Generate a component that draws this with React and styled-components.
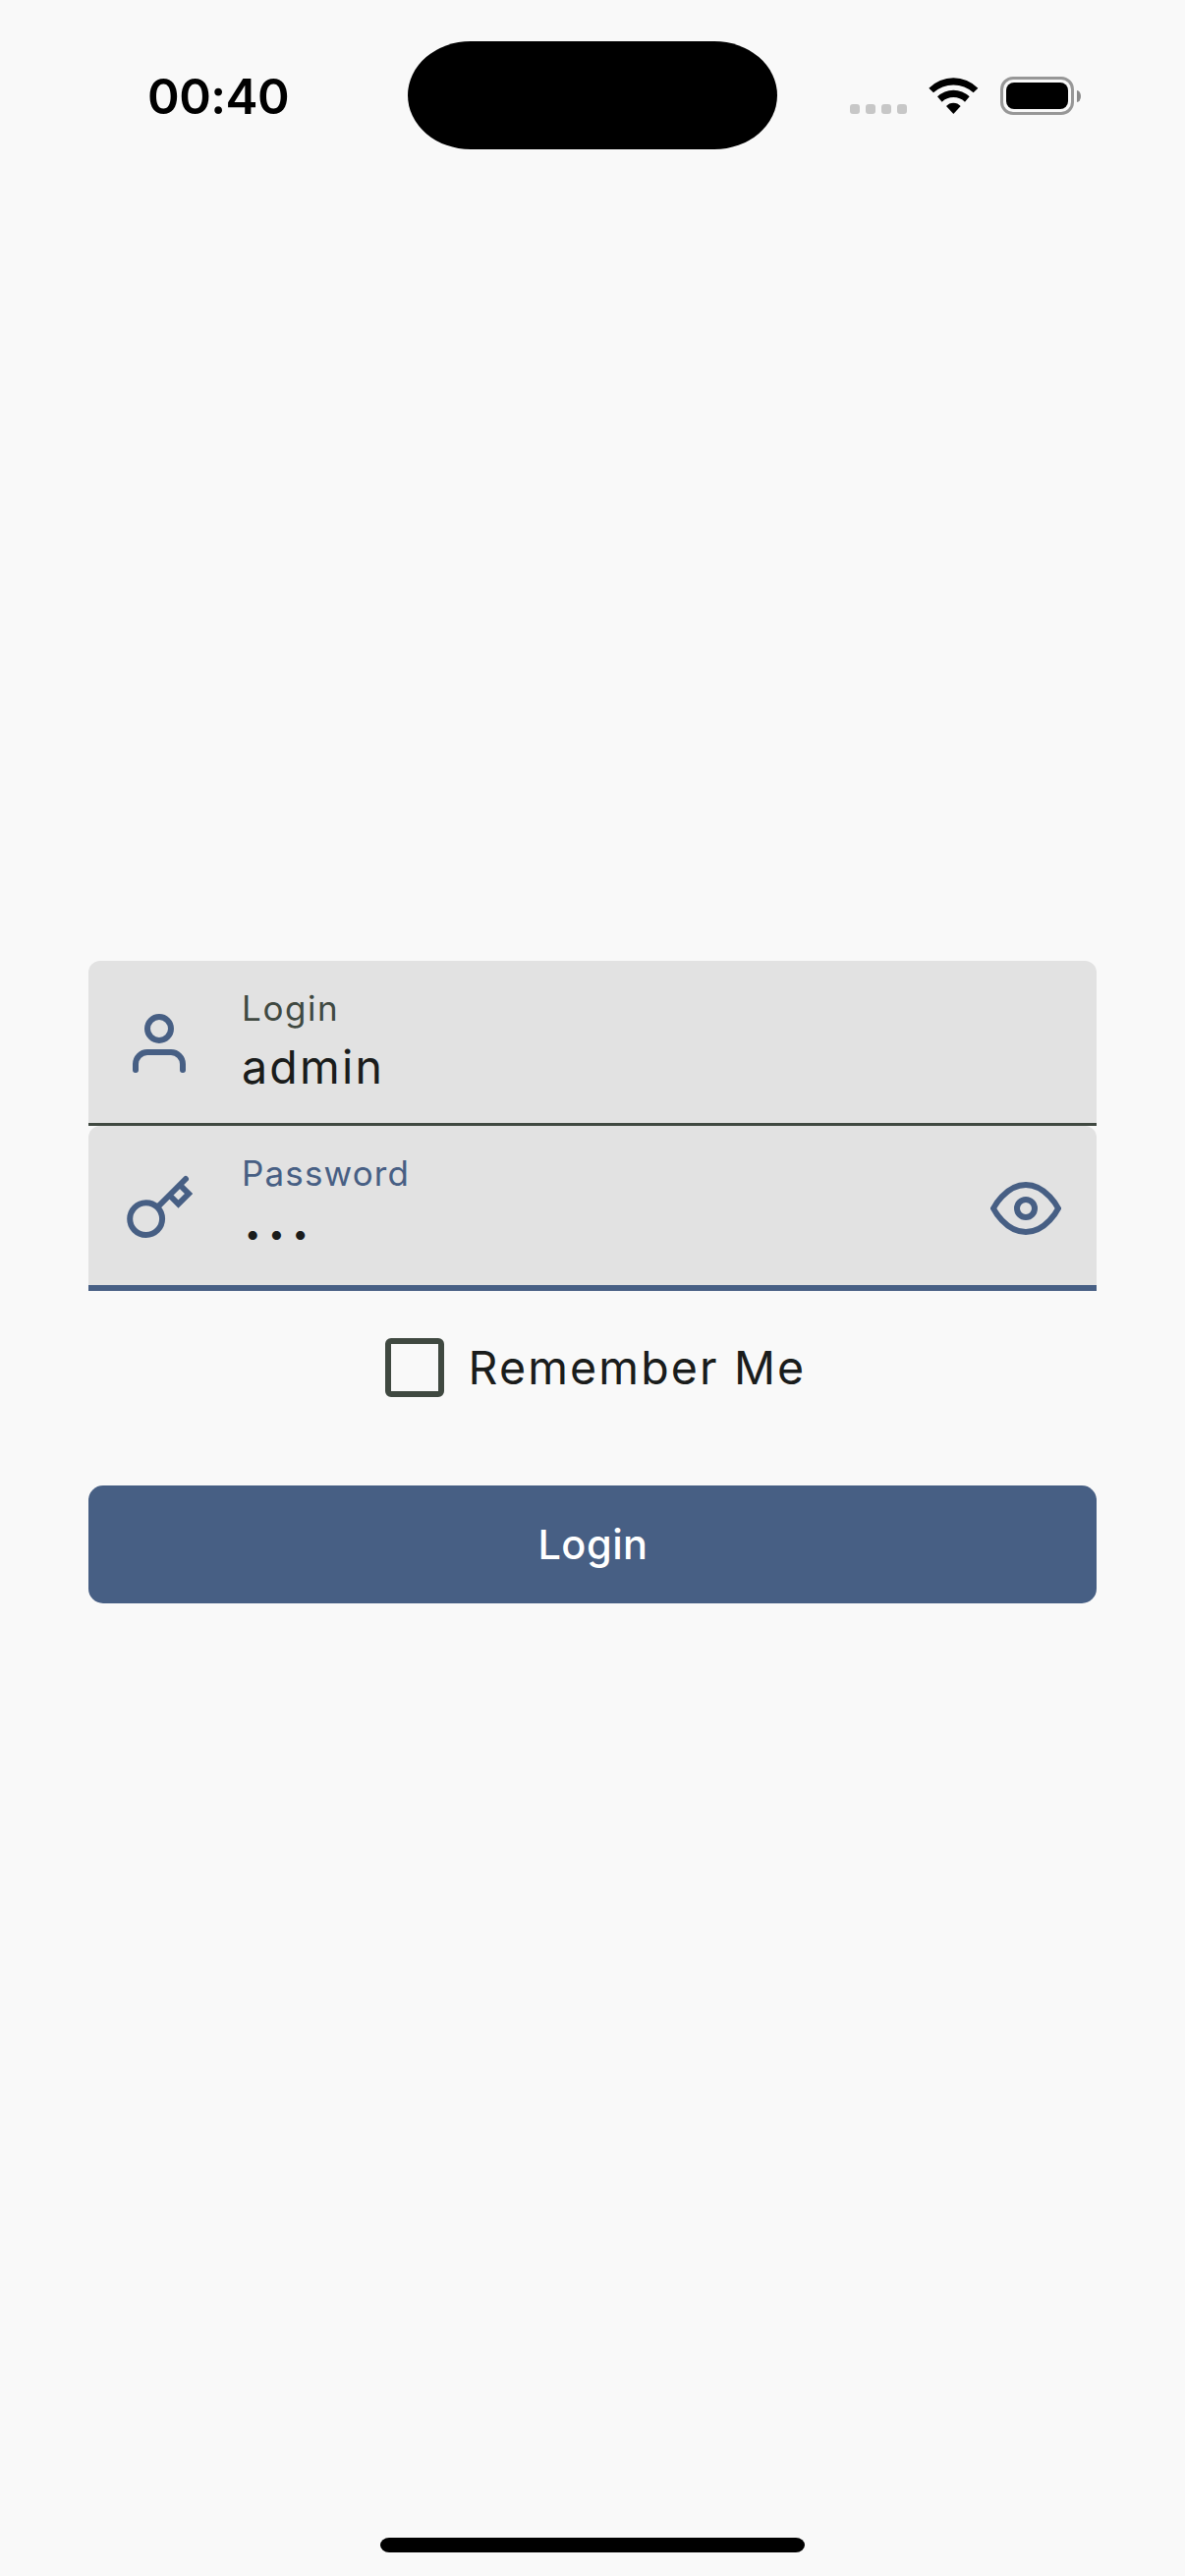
import React from "react";
import styled, { createGlobalStyle, css } from "styled-components";

const color = {
  background: "#f9f9f9",
  primary: "#475f84",
  field: "#e2e2e2",
  text: "#1a1c1b",
  muted: "#404941",
};

const GlobalStyle = createGlobalStyle`
  body {
    margin: 0;
    background: ${color.background};
    font-family: Inter, "Liberation Sans", sans-serif;
    font-weight: 400;
  }
`;

const Screen = styled.div`
  display: flex;
  flex-direction: column;
  box-sizing: border-box;
  width: 100%;
  height: 2622px;
  overflow: hidden;
  background: ${color.background};
`;

const StatusBar = styled.header`
  display: grid;
  grid-template-columns: 415px 376px 1fr;
  align-items: center;
  height: 195px;
  flex: none;
`;

const Clock = styled.time`
  padding: 1px 0 0 150px;
  font-size: 49.5px;
  font-weight: 600;
  line-height: 60px;
  letter-spacing: -0.5px;
  color: #000;
`;

const Island = styled.div`
  height: 110px;
  margin-bottom: 1px;
  border-radius: 64px / 55px;
  background: #000;
`;

const Indicators = styled.div`
  display: flex;
  align-items: flex-end;
  height: 39px;
  padding-left: 74px;
`;

const Signal = styled.div`
  display: flex;
  gap: 6px;
  margin: 0 22px 1px 0;
`;

const SignalDot = styled.span`
  width: 10px;
  height: 10px;
  border-radius: 3px;
  background: #c7c7c7;
`;

const WifiGlyph = styled.svg`
  width: 51px;
  height: 38px;
  margin: 0 22px 1px 0;
  fill: #000;
`;

const BatteryCase = styled.div`
  box-sizing: border-box;
  width: 75px;
  height: 39px;
  padding: 3px;
  border: 3px solid #979797;
  border-radius: 13px;
`;

const BatteryLevel = styled.div`
  height: 100%;
  border-radius: 8px;
  background: #000;
`;

const BatteryTip = styled.div`
  width: 4px;
  height: 12px;
  margin: 0 0 13.5px 3px;
  border-radius: 0 4px 4px 0 / 0 6px 6px 0;
  background: #8a8a8a;
`;

const Form = styled.main`
  display: flex;
  flex: 1;
  flex-direction: column;
  padding: 783px 90px 0;
`;

const Field = styled.label`
  display: flex;
  align-items: center;
  box-sizing: border-box;
  height: 168px;
  padding: 0 36px;
  border-radius: 12px 12px 0 0;
  background: ${color.field};
  box-shadow: inset 0 ${(p) => (p.$focused ? "-6px" : "-3px")} 0
    ${(p) => (p.$focused ? color.primary : color.muted)};
`;

const FieldBody = styled.span`
  display: flex;
  flex: 1;
  flex-direction: column;
  height: 120px;
  margin-left: 48px;
`;

const FieldLabel = styled.span`
  font-size: 35px;
  line-height: 48px;
  letter-spacing: ${(p) => (p.$focused ? "1.15px" : "1.6px")};
  color: ${(p) => (p.$focused ? color.primary : color.muted)};
`;

const FieldValue = styled.span`
  font-size: 46.5px;
  line-height: 72px;
  letter-spacing: 2.25px;
  color: ${color.text};
  ${(p) =>
    p.$masked &&
    css`
      padding: 2px 0 0 3px;
      font-size: 29px;
      letter-spacing: 7.9px;
    `}
`;

const LineIcon = styled.svg`
  flex: none;
  width: 72px;
  height: 72px;
  fill: none;
  stroke: ${color.primary};
  stroke-width: 2;
  stroke-linecap: round;
  stroke-linejoin: miter;
`;

const RememberRow = styled.label`
  display: flex;
  gap: 24.5px;
  margin: 48px 0 0 302px;
  font-size: 46.5px;
  line-height: 60px;
  letter-spacing: 2.15px;
  color: ${color.text};
`;

const Checkbox = styled.span`
  box-sizing: border-box;
  width: 60px;
  height: 60px;
  border: 6px solid ${color.muted};
  border-radius: 6px;
`;

const SubmitButton = styled.button`
  height: 120px;
  margin-top: 90px;
  padding: 0 0 0 1px;
  border: 0;
  border-radius: 15px;
  background: ${color.primary};
  color: #fff;
  font: 500 41.5px/120px Inter, "Liberation Sans", sans-serif;
  letter-spacing: 0.5px;
`;

const HomeIndicator = styled.div`
  flex: none;
  align-self: center;
  width: 432px;
  height: 15px;
  margin-bottom: 24px;
  border-radius: 9px / 7.5px;
  background: #000;
`;

const UserIcon = () => (
  <LineIcon viewBox="0 0 24 24">
    <path d="M20 21v-2a4 4 0 0 0-4-4H8a4 4 0 0 0-4 4v2" />
    <circle cx="12" cy="7" r="4" />
  </LineIcon>
);

const KeyIcon = () => (
  <LineIcon viewBox="0 0 24 24">
    <path d="M21 2l-2 2m-7.61 7.61a5.5 5.5 0 1 1-7.778 7.778 5.5 5.5 0 0 1 7.777-7.777zm0 0L15.5 7.5m0 0l3 3L22 7l-3-3m-3.5 3.5L19 4" />
  </LineIcon>
);

const EyeIcon = () => (
  <LineIcon viewBox="0 0 24 24">
    <path d="M1 12s4-8 11-8 11 8 11 8-4 8-11 8-11-8-11-8z" />
    <circle cx="12" cy="12" r="3" />
  </LineIcon>
);

const WifiIcon = () => (
  <WifiGlyph viewBox="315 84 153 114">
    <path d="M316 119A105 105 0 0 1 466 119L452 133A90 90 0 0 0 330 133Z" />
    <path d="M342 145A70 70 0 0 1 440 145L426 161A51 51 0 0 0 356 161Z" />
    <path d="M369 174A29 29 0 0 1 413 174L391 198Z" />
  </WifiGlyph>
);

export default function App() {
  return (
    <Screen>
      <GlobalStyle />
      <StatusBar>
        <Clock>00:40</Clock>
        <Island />
        <Indicators>
          <Signal>
            <SignalDot />
            <SignalDot />
            <SignalDot />
            <SignalDot />
          </Signal>
          <WifiIcon />
          <BatteryCase>
            <BatteryLevel />
          </BatteryCase>
          <BatteryTip />
        </Indicators>
      </StatusBar>
      <Form>
        <Field>
          <UserIcon />
          <FieldBody>
            <FieldLabel>Login</FieldLabel>
            <FieldValue>admin</FieldValue>
          </FieldBody>
        </Field>
        <Field $focused>
          <KeyIcon />
          <FieldBody>
            <FieldLabel $focused>Password</FieldLabel>
            <FieldValue $masked>•••</FieldValue>
          </FieldBody>
          <EyeIcon />
        </Field>
        <RememberRow>
          <Checkbox />
          Remember Me
        </RememberRow>
        <SubmitButton type="button">Login</SubmitButton>
      </Form>
      <HomeIndicator />
    </Screen>
  );
}
